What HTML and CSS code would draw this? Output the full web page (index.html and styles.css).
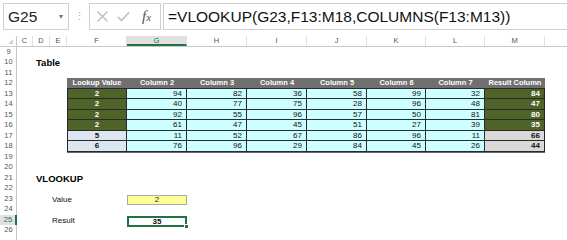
FILE: index.html
```html
<!DOCTYPE html>
<html>
<head>
<meta charset="utf-8">
<link rel="stylesheet" href="styles.css">
</head>
<body>
<div class="app">
  <div class="fbar">
    <div class="namebox"><span class="nb-text">G25</span><span class="caret">▾</span></div>
    <div class="grip">⋮</div>
    <div class="btns">
      <svg class="ico" width="13" height="13" viewBox="0 0 13 13"><path d="M1.5 1.5 L11.5 11.5 M11.5 1.5 L1.5 11.5" stroke="#b9b9b9" stroke-width="1.3" fill="none"/></svg>
      <svg class="ico" width="13" height="13" viewBox="0 0 13 13"><path d="M1 7 L4.5 10.5 L12 2.5" stroke="#b9b9b9" stroke-width="1.5" fill="none"/></svg>
      <span class="fx">f<span class="fx-x">x</span></span>
    </div>
    <div class="formula">=VLOOKUP(G23,F13:M18,COLUMNS(F13:M13))</div>
  </div>

  <div class="sheet">
    <div class="rowheads">
      <div class="corner"><span class="tri"></span></div>
      <div class="rh">9</div>
      <div class="rh">10</div>
      <div class="rh">11</div>
      <div class="rh">12</div>
      <div class="rh">13</div>
      <div class="rh">14</div>
      <div class="rh">15</div>
      <div class="rh">16</div>
      <div class="rh">17</div>
      <div class="rh">18</div>
      <div class="rh">19</div>
      <div class="rh">20</div>
      <div class="rh">21</div>
      <div class="rh">22</div>
      <div class="rh">23</div>
      <div class="rh">24</div>
      <div class="rh sel">25</div>
      <div class="rh">26</div>
      <div class="rh"></div>
    </div>

    <div class="body">
      <div class="colheads">
        <div class="ch w-c">C</div>
        <div class="ch w-d">D</div>
        <div class="ch w-e">E</div>
        <div class="ch w60">F</div>
        <div class="ch w60 sel">G</div>
        <div class="ch w60">H</div>
        <div class="ch w60">I</div>
        <div class="ch w60">J</div>
        <div class="ch w59">K</div>
        <div class="ch w59">L</div>
        <div class="ch w60">M</div>
        <div class="ch wn"></div>
      </div>

      <div class="row"></div>
      <div class="row"><span class="title">Table</span></div>
      <div class="row"></div>

      <div class="tbl">
        <div class="th">Lookup Value</div>
        <div class="th">Column 2</div>
        <div class="th">Column 3</div>
        <div class="th">Column 4</div>
        <div class="th">Column 5</div>
        <div class="th">Column 6</div>
        <div class="th">Column 7</div>
        <div class="th">Result Column</div>

        <div class="td key">2</div><div class="td">94</div><div class="td">82</div><div class="td">36</div><div class="td">58</div><div class="td">99</div><div class="td">32</div><div class="td res">84</div>
        <div class="td key">2</div><div class="td">40</div><div class="td">77</div><div class="td">75</div><div class="td">28</div><div class="td">96</div><div class="td">48</div><div class="td res">47</div>
        <div class="td key">2</div><div class="td">92</div><div class="td">55</div><div class="td">96</div><div class="td">57</div><div class="td">50</div><div class="td">81</div><div class="td res">80</div>
        <div class="td key">2</div><div class="td">61</div><div class="td">47</div><div class="td">45</div><div class="td">51</div><div class="td">27</div><div class="td">39</div><div class="td res">35</div>
        <div class="td key2">5</div><div class="td">11</div><div class="td">52</div><div class="td">67</div><div class="td">86</div><div class="td">96</div><div class="td">11</div><div class="td res2">66</div>
        <div class="td key2">6</div><div class="td">76</div><div class="td">96</div><div class="td">29</div><div class="td">84</div><div class="td">45</div><div class="td">26</div><div class="td res2">44</div>
      </div>

      <div class="row"></div>
      <div class="row"></div>
      <div class="row"><span class="title">VLOOKUP</span></div>
      <div class="row"></div>
      <div class="row line"><span class="label">Value</span><span class="vcell">2</span></div>
      <div class="row"></div>
      <div class="row line"><span class="label">Result</span><span class="rcell">35<span class="handle"></span></span></div>
      <div class="row"></div>
      <div class="row"></div>
    </div>
  </div>
</div>
</body>
</html>
```

FILE: styles.css
```css
* { box-sizing: border-box; }
html, body { margin: 0; padding: 0; background: #fff; }
body { font-family: "Liberation Sans", Arial, sans-serif; width: 567px; height: 240px; overflow: hidden; }

.app { display: flex; flex-direction: column; }

/* formula bar */
.fbar { display: flex; align-items: stretch; height: 36px; padding: 3px 0 6px 3px; }
.namebox { width: 66px; border: 1px solid #d0d0d0; display: flex; align-items: center; justify-content: space-between; padding: 0 5px 0 4px; }
.nb-text { font-size: 15.5px; color: #222; }
.caret { font-size: 8px; color: #777; }
.grip { width: 20px; display: flex; align-items: center; justify-content: center; color: #aaa; font-size: 11px; }
.btns { width: 72px; border: 1px solid #d0d0d0; display: flex; align-items: center; padding-left: 6px; gap: 8px; }
.fx { font-family: "Liberation Serif", "Times New Roman", serif; font-style: italic; font-size: 15px; color: #555; margin-left: 4px; }
.fx-x { font-size: 11px; }
.formula { flex: 1; margin-left: 2px; border: 1px solid #d0d0d0; border-right: none; display: flex; align-items: center; padding-left: 4px; font-size: 15.5px; color: #111; white-space: nowrap; overflow: hidden; }

/* sheet */
.sheet { display: flex; }
.rowheads { width: 17px; display: flex; flex-direction: column; border-right: 1px solid #c8c8c8; }
.corner { height: 10.5px; border-bottom: 1px solid #c8c8c8; position: relative; }
.tri { position: absolute; right: 3px; bottom: 2px; width: 0; height: 0; border-left: 5px solid transparent; border-bottom: 5px solid #d4d4d4; }
.rh { height: 10.5px; font-size: 7.5px; line-height: 10.5px; color: #555; text-align: center; padding-left: 1px; }
.rh.sel { background: #e1e1e1; color: #217346; border-right: 2px solid #217346; margin-right: -1px; }

.body { flex: 1; display: flex; flex-direction: column; }
.colheads { display: flex; height: 10.5px; border-bottom: 1px solid #c8c8c8; }
.ch { font-size: 7.5px; line-height: 10px; color: #555; text-align: center; border-right: 1px solid #e0e0e0; }
.ch.sel { background: #e1e1e1; color: #217346; border-bottom: 2px solid #217346; }
.w-c { width: 16px; }
.w-d { width: 17px; }
.w-e { width: 17px; }
.w60 { width: 60px; }
.w59 { width: 59px; }
.wn { flex: 1; border-right: none; }

.row { height: 10.5px; display: flex; align-items: center; }
.title { font-weight: bold; font-size: 9.5px; margin-left: 19px; color: #000; }

/* lookup table */
.tbl { display: grid; grid-template-columns: 60px 60px 60px 60px 60px 59px 59px 60px; grid-auto-rows: 10.5px; margin-left: 50px; width: 478px; border-right: 1px solid #666; border-bottom: 1px solid #666; }
.th { background: #707070; color: #fff; font-weight: bold; font-size: 7.5px; text-align: center; line-height: 10.5px; border-bottom: 1px solid #2a2a2a; white-space: nowrap; }
.td { background: #ccffff; font-size: 8px; line-height: 9.5px; text-align: right; padding-right: 4px; color: #111; border-right: 1px solid #2a2a2a; border-bottom: 1px solid #2a2a2a; }
.td.key { background: #4f6228; color: #fff; font-weight: bold; text-align: center; padding-right: 0; border-left: 1px solid #2a2a2a; }
.td.key2 { background: #dce6f1; color: #111; font-weight: bold; text-align: center; padding-right: 0; border-left: 1px solid #2a2a2a; }
.td.res { background: #4f6228; color: #fff; font-weight: bold; }
.td.res2 { background: #d9d9d9; color: #111; font-weight: bold; }

/* bottom block */
.line { display: grid; grid-template-columns: 16px 17px 77px 60px; align-items: stretch; }
.label { grid-column: 3; font-size: 8px; line-height: 10.5px; padding-left: 2px; color: #111; }
.vcell { grid-column: 4; background: #ffff99; border: 1px solid #a9a9a9; font-size: 8px; line-height: 8.5px; text-align: center; color: #222; }
.rcell { grid-column: 4; position: relative; border: 2px solid #217346; font-size: 8px; font-weight: bold; line-height: 7px; text-align: center; color: #111; }
.handle { position: absolute; right: -4px; bottom: -4px; width: 5px; height: 5px; background: #217346; border: 1px solid #fff; }
```
